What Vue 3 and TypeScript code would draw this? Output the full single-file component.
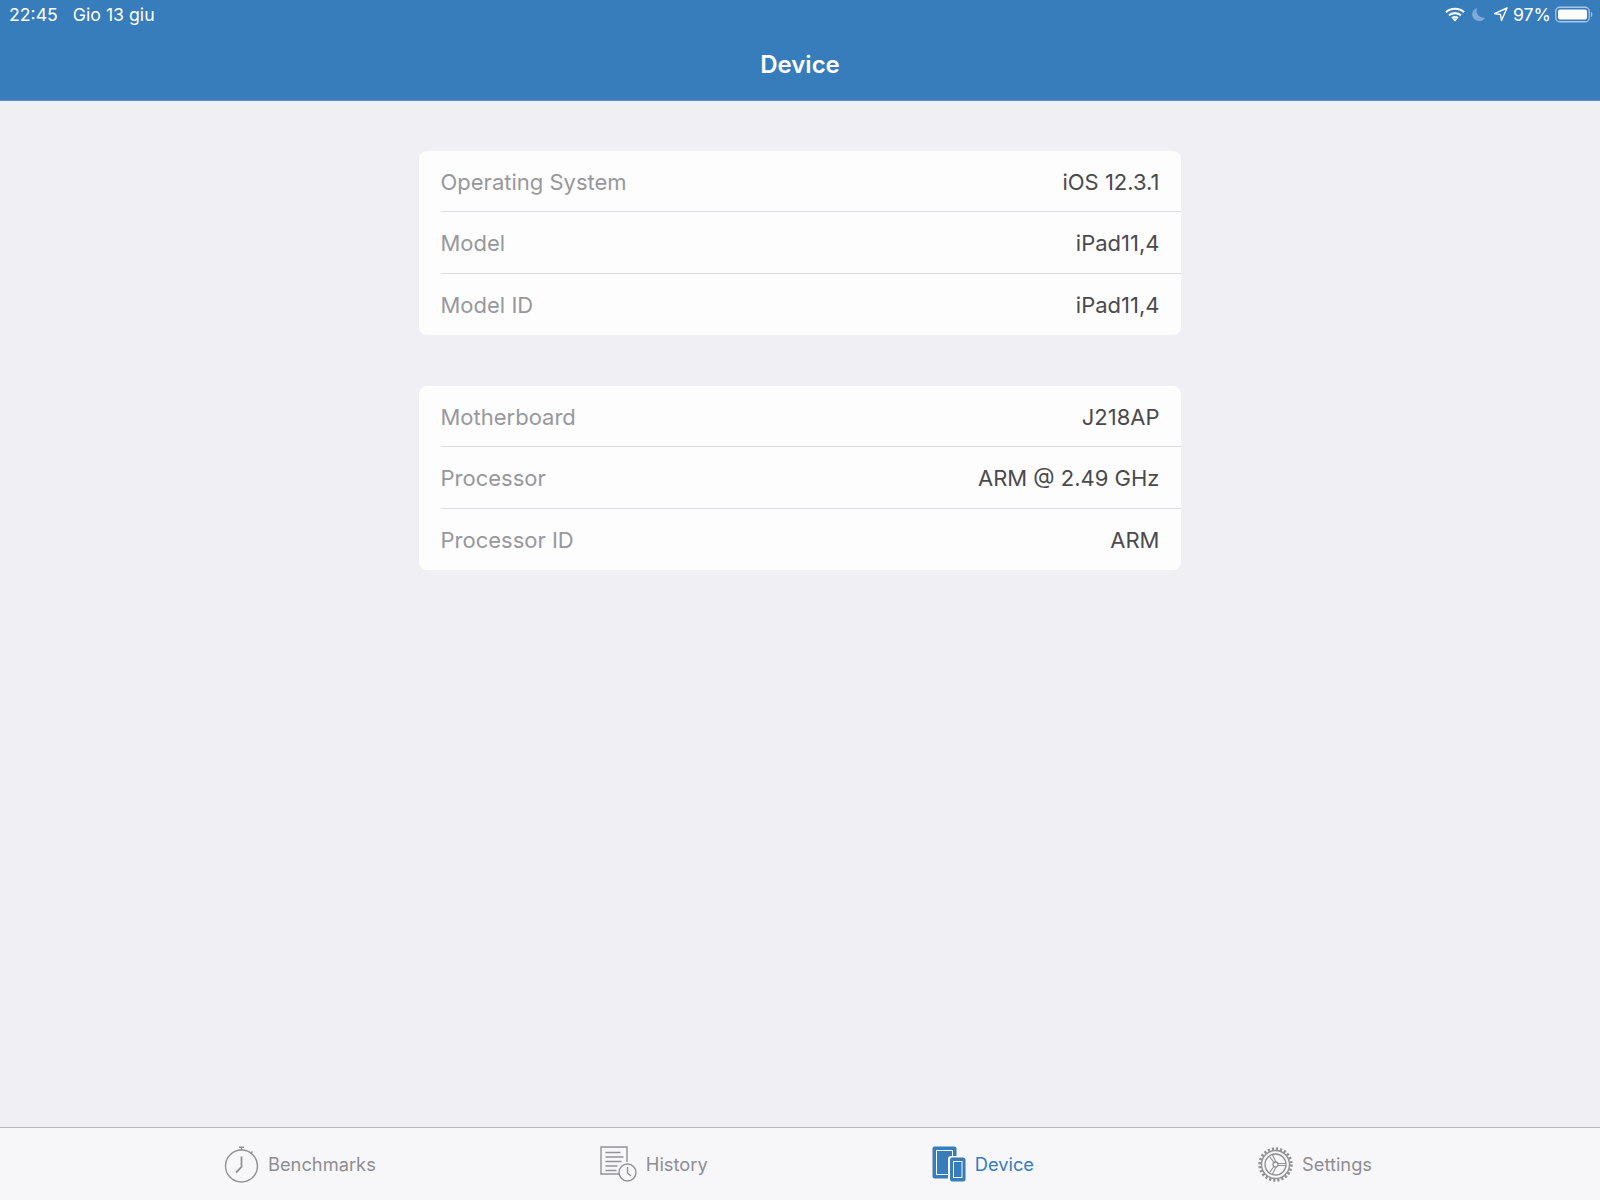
<script setup lang="ts">
const groups = [
  [
    { label: 'Operating System', value: 'iOS 12.3.1' },
    { label: 'Model', value: 'iPad11,4' },
    { label: 'Model ID', value: 'iPad11,4' },
  ],
  [
    { label: 'Motherboard', value: 'J218AP' },
    { label: 'Processor', value: 'ARM @ 2.49 GHz' },
    { label: 'Processor ID', value: 'ARM' },
  ],
]
</script>

<template>
  <div class="screen">
    <header class="nav">
      <div class="status">
        <div class="status-left">
          <span>22:45</span>
          <span>Gio 13 giu</span>
        </div>
        <div class="status-right">
          <svg class="wifi" width="20" height="15" viewBox="0 0 20 15">
            <path d="M1 5.2C5.8.6 14.2.6 19 5.2M4 8.3c3.4-3 8.6-3 12 0M7 11.2c1.8-1.400 4.200-1.400 6 0" fill="none" stroke="#fff" stroke-width="2.200" />
            <path d="M10 14.600l-2.200-2.400c1.300-.9 3.100-.9 4.400 0z" fill="#fff" />
          </svg>
          <svg class="moon" width="14" height="15" viewBox="0 0 14 15">
            <path d="M5.200 1A6.600 6.600 0 0 0 7.200 14a6.600 6.600 0 0 0 6-3.600A6.800 6.800 0 0 1 5.200 1z" fill="#7eaad8" />
          </svg>
          <svg class="arrow" width="15" height="15" viewBox="0 0 15 15">
            <path d="M14 1L1.500 6.600l6 .9 1 6z" fill="none" stroke="#fff" stroke-width="1.400" stroke-linejoin="round" />
          </svg>
          <span class="pct">97%</span>
          <svg class="battery" width="38" height="17" viewBox="0 0 38 17">
            <rect x="0.750" y="1.250" width="33.500" height="14.500" rx="4" fill="none" stroke="#a9c6e6" stroke-width="1.300" />
            <rect x="3" y="3.500" width="29" height="10" rx="2" fill="#fff" />
            <path d="M36 6v5c.9-.3 1.400-1.300 1.400-2.500S36.900 6.300 36 6z" fill="#a9c6e6" />
          </svg>
        </div>
      </div>
      <h1 class="title">Device</h1>
    </header>

    <main class="content">
      <section v-for="(rows, i) in groups" :key="i" class="card">
        <div v-for="row in rows" :key="row.label" class="row">
          <span class="label">{{ row.label }}</span>
          <span class="value">{{ row.value }}</span>
        </div>
      </section>
    </main>

    <footer class="tabs">
      <div class="tab">
        <svg width="35" height="37" viewBox="0 0 35 37" fill="none" stroke="#929296" stroke-width="1.400">
          <circle cx="17.500" cy="20" r="16" />
          <path d="M15 1.200h5M17.500 1.200V4M28.500 5.500l-1.800 2" />
          <path d="M17.500 10.500v10.500l-5.500 5.500" stroke-width="1.800" />
        </svg>
        <span>Benchmarks</span>
      </div>
      <div class="tab">
        <svg width="37" height="36" viewBox="0 0 37 36" fill="none" stroke="#929296" stroke-width="1.400">
          <path d="M20 28H1V1h26v15" />
          <path d="M5.500 6.500h15M5.500 11h18M5.500 15.500h16M5.500 20h12M5.500 24.500h11" />
          <circle cx="27.500" cy="26.500" r="8.500" />
          <path d="M27.500 21v6l3.500 3" />
        </svg>
        <span>History</span>
      </div>
      <div class="tab active">
        <svg width="34" height="36" viewBox="0 0 34 36">
          <rect x="0.500" y="0.500" width="24" height="32" rx="2" fill="#377cbb" />
          <rect x="4" y="4" width="17" height="25" fill="#f7f7f9" />
          <rect x="5" y="5" width="15" height="23" fill="#377cbb" />
          <rect x="16" y="10" width="18" height="26" rx="3" fill="#f7f7f9" />
          <rect x="18" y="11.500" width="15.500" height="24" rx="2.500" fill="#377cbb" />
          <rect x="21" y="15" width="9.500" height="17" fill="#f7f7f9" />
          <rect x="22" y="16" width="7.500" height="15" fill="#377cbb" />
        </svg>
        <span>Device</span>
      </div>
      <div class="tab">
        <svg width="35" height="35" viewBox="0 0 35 35" fill="none" stroke="#929296">
          <circle cx="17.500" cy="17.500" r="15.700" stroke-width="3" stroke-dasharray="2.200 1.908" />
          <circle cx="17.500" cy="17.500" r="14" stroke-width="1.400" />
          <circle cx="17.500" cy="17.500" r="10.500" stroke-width="1.300" />
          <circle cx="17.500" cy="17.500" r="2.500" stroke-width="1.300" />
          <path d="M16 15.500L11.500 9.500M18 15L14.500 8M20 16.500h8M20 18.500h8M16 19.500L11.500 25.500M18 20l-3.500 7" stroke-width="1.100" />
        </svg>
        <span>Settings</span>
      </div>
    </footer>
  </div>
</template>

<style scoped>
.screen {
  width: 1600px;
  height: 1200px;
  display: flex;
  flex-direction: column;
  background: #efeff4;
  font-family: Inter, "Liberation Sans", sans-serif;
}

.nav {
  height: 101px;
  background: #377cbb;
  color: #fff;
  box-shadow: inset 0 -1px 0 #5e8fc0;
}

.status {
  height: 29px;
  display: flex;
  justify-content: space-between;
  align-items: center;
  padding: 0 7px 0 9px;
  font-size: 17.700px;
}
.status-left { display: flex; gap: 15px; }
.status-right { display: flex; align-items: center; gap: 7px; }
.status-right .pct { margin-left: -2px; }
.status-right .battery { margin-left: -3px; }

.title {
  margin: 0;
  margin-top: 18px;
  text-align: center;
  font-size: 24px;
  line-height: 36px;
  font-weight: 600;
}

.content {
  flex: 1;
  width: 762px;
  margin: 0 auto;
  padding-top: 50px;
  display: flex;
  flex-direction: column;
  gap: 51px;
}

.card {
  background: #fdfdfe;
  border-radius: 8px;
  padding-left: 21.500px;
}

.row {
  height: 61.330px;
  display: flex;
  justify-content: space-between;
  align-items: center;
  padding: 1px 21.500px 0 0;
  font-size: 22px;
  border-bottom: 1px solid #dcdce0;
  box-sizing: border-box;
}
.row:last-child {
  border-bottom: none;
}

.label { color: #98989c; }
.value { color: #4a4a4c; }

.tabs {
  height: 73px;
  box-sizing: border-box;
  border-top: 1px solid #b9b9bc;
  background: #f7f7f9;
  display: flex;
  align-items: center;
  gap: 224px;
  padding-left: 224px;
}

.tab {
  display: flex;
  align-items: center;
  gap: 9px;
  font-size: 18.300px;
  color: #8e8e93;
}
.tab.active { color: #377cbb; }
</style>
